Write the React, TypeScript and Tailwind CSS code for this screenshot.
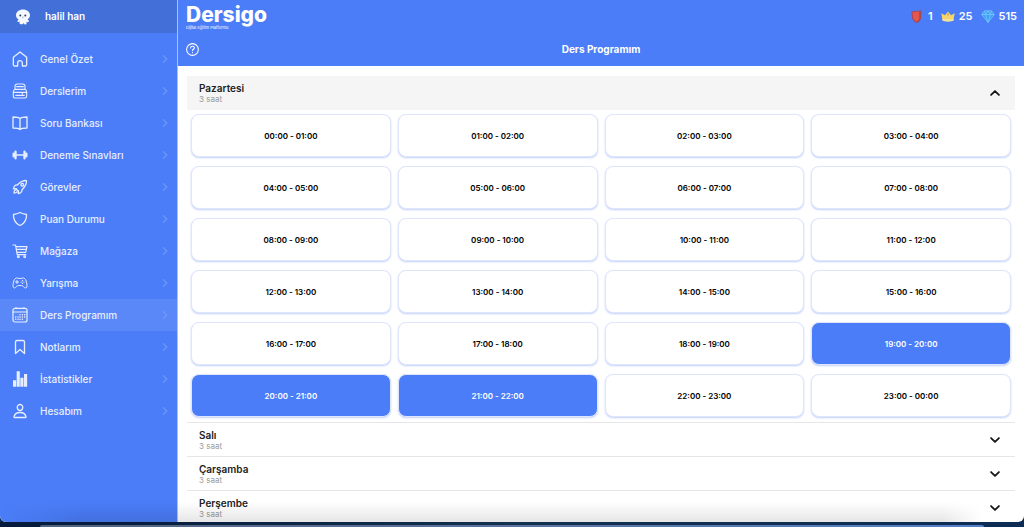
import { ReactNode, useState } from "react";
import {
  IoBarbell,
  IoBookmarkOutline,
  IoChevronDown,
  IoChevronForward,
  IoChevronUp,
  IoGameControllerOutline,
  IoPersonOutline,
  IoRocketOutline,
  IoShieldOutline,
} from "react-icons/io5";

const lineIcon = {
  viewBox: "0 0 24 24",
  fill: "none",
  stroke: "currentColor",
  strokeWidth: 2,
  strokeLinecap: "round",
  strokeLinejoin: "round",
  className: "size-4",
  "aria-hidden": true,
} as const;

const ionIcon = "size-4 [&_*]:stroke-[42px]";

const HomeIcon = () => (
  <svg {...lineIcon}>
    <path d="M2 9.5 12 1.5l10 8V20.5a2 2 0 0 1-2 2h-4.500V18a3.500 3.500 0 0 0-7 0v4.500H4a2 2 0 0 1-2-2z" />
  </svg>
);

const BackpackIcon = () => (
  <svg {...lineIcon} strokeWidth={1.7}>
    <path d="M4.500 9.500V5q0-3.500 3.500-3.500h8q3.500 0 3.500 3.500v4.500M7 5.500h10M4.500 9.500h15q2.500 1 2.500 4V20q0 2.500-2.500 2.500h-15Q2 22.500 2 20v-6.500q0-3 2.500-4zM2.500 14h19M5.500 18.500h13M15.500 14v2.500" />
  </svg>
);

const BookIcon = () => (
  <svg {...lineIcon}>
    <path d="M12 5.500C10.500 3.800 7.500 3 1.500 3v16.500c6 0 9 .5 10.500 2.200 1.500-1.700 4.500-2.200 10.500-2.200V3C16.500 3 13.500 3.800 12 5.500zV21.500" />
  </svg>
);

const CartIcon = () => (
  <svg {...lineIcon} strokeWidth={1.8}>
    <path d="M1.500 3h3.800l2.500 14.500h13M5.800 5.500h16.700L20.500 14H7.500M7 9.700h14" />
    <circle cx="9.500" cy="20.700" r="1.300" />
    <circle cx="19" cy="20.700" r="1.300" />
  </svg>
);

const CalendarIcon = () => (
  <svg {...lineIcon} strokeWidth={1.8}>
    <rect x="1.500" y="2" width="21" height="20.500" rx="3" />
    <path d="M1.500 7.500h21M6 1v1M18 1v1" />
    <path
      strokeWidth="2.200"
      d="M12 11.500h.1M15.500 11.500h.1M19 11.500h.1M5.500 15h.1M9 15h.1M12 15h.1M15.500 15h.1M19 15h.1M5.500 18.500h.1M9 18.500h.1M12 18.500h.1M15.500 18.500h.1"
    />
  </svg>
);

const ChartIcon = () => (
  <svg viewBox="0 0 24 24" fill="currentColor" className="size-4" aria-hidden>
    <path d="M1.500 14h4.700v9.500H1.500zM7 .5h4.700v23H7zM12.500 10h4.700v13.500h-4.700zM18 4.500h4.700v19H18z" />
  </svg>
);

const Avatar = () => (
  <svg viewBox="0 0 16 16" className="size-4" aria-hidden>
    <path
      fill="#f5f9ff"
      d="M8 .5c3.800 0 7 2.400 7 5.700 0 2-1.100 3.300-2.500 4 1 .6 1.600 1.400 1.300 2.300-.4.9-1.500.8-2.300.3.300 1.300.2 2.500-.9 2.700-1 .2-1.500-.7-2-1.500-.4.800-1.100 1.500-1.900 1.300-1 .2-2-.1-2.200-1-.1-.6 0-1.200.2-1.800-.8.500-1.900.6-2.200-.1-.2-.8.400-1.500 1.300-2C2 9.400 1 8.100 1 6.200 1 2.900 4.200.5 8 .5z"
    />
    <circle cx="5.300" cy="6.500" r="1" fill="#28406f" />
    <circle cx="10.300" cy="6.500" r="1" fill="#28406f" />
    <path d="M7.200 8.200q.6.600 1.200 0" stroke="#28406f" strokeWidth=".6" fill="none" />
  </svg>
);

const HelpIcon = () => (
  <svg viewBox="0 0 24 24" className="size-[13px]" fill="none" stroke="currentColor" strokeWidth="2" aria-hidden>
    <circle cx="12" cy="12" r="10.800" />
    <path strokeLinecap="round" d="M8.500 9.200c0-2 1.500-3.300 3.500-3.300s3.500 1.200 3.500 3c0 2.600-3.500 2.600-3.500 5.100M12 17.500v.3" />
  </svg>
);

const ShieldBadge = () => (
  <svg viewBox="0 0 11 13" className="h-[13px] w-[11px]" aria-hidden>
    <path d="M.5 1.500 10.500.5 10 8c-.3 2.500-2 4-4.500 5C3 11.500 1.300 10 1 7.500z" fill="#a9434f" />
    <path d="M1.500 2.200 8 1.500v8L5.500 11.800C3.500 10.600 2.200 9.300 2 7.500z" fill="#e4574f" />
    <path d="M8 1.500 9.700 1.300 9.300 7.800c-.2.900-.7 1.600-1.300 2.200z" fill="#8d5a58" />
  </svg>
);

const CrownBadge = () => (
  <svg viewBox="0 0 14 11" className="h-[11px] w-[14px]" aria-hidden>
    <path d="M.3 2.200 4 4.200 7 .6l3 3.600 3.700-2L12.300 9.800q-5.300 1.400-10.600 0z" fill="#f6d469" />
    <path d="M1.300 7.400q5.700 1.800 11.400 0l-.4 2.400q-5.300 1.400-10.600 0z" fill="#f3e3a0" />
    <path d="M7 1.800v3" stroke="#c9a14c" strokeWidth="1" />
  </svg>
);

const DiamondBadge = () => (
  <svg viewBox="0 0 14 13" className="h-[13px] w-[14px]" aria-hidden>
    <path d="M3.500.8h7L13.300 4.500 7 12.500.7 4.500z" fill="#3fa0f5" />
    <path
      d="M3.500.8h7L13.300 4.500 7 12.500.7 4.500zM.7 4.500h12.600M3.500.8 4.500 4.500 7 12.500l2.500-8 1-3.700M4.500 4.500 7 .8l2.500 3.700"
      fill="none"
      stroke="#7ccbfa"
      strokeWidth=".7"
    />
  </svg>
);

const menu: { label: string; icon: ReactNode }[] = [
  { label: "Genel Özet", icon: <HomeIcon /> },
  { label: "Derslerim", icon: <BackpackIcon /> },
  { label: "Soru Bankası", icon: <BookIcon /> },
  { label: "Deneme Sınavları", icon: <IoBarbell className="size-4" /> },
  { label: "Görevler", icon: <IoRocketOutline className={ionIcon} /> },
  { label: "Puan Durumu", icon: <IoShieldOutline className={ionIcon} /> },
  { label: "Mağaza", icon: <CartIcon /> },
  { label: "Yarışma", icon: <IoGameControllerOutline className="size-4" /> },
  { label: "Ders Programım", icon: <CalendarIcon /> },
  { label: "Notlarım", icon: <IoBookmarkOutline className={ionIcon} /> },
  { label: "İstatistikler", icon: <ChartIcon /> },
  { label: "Hesabım", icon: <IoPersonOutline className={ionIcon} /> },
];

const days = ["Pazartesi", "Salı", "Çarşamba", "Perşembe"];

const pad = (n: number) => String(n % 24).padStart(2, "0");
const slots = Array.from({ length: 24 }, (_, i) => `${pad(i)}:00 - ${pad(i + 1)}:00`);

const Sidebar = () => (
  <aside className="flex w-[178px] shrink-0 flex-col border-r border-[#a9c2ff] bg-[#4b7df8] text-[#e6eeff]">
    <div className="flex h-[33px] items-center gap-3.5 bg-[#4270d8] pl-[15px] text-[10px] font-semibold text-white">
      <Avatar />
      halil han
    </div>
    <nav className="mt-2.5 flex flex-col">
      {menu.map(({ label, icon }) => (
        <a
          key={label}
          href="#"
          className={
            label === "Ders Programım"
              ? "flex h-8 items-center bg-[#5b88f8] pr-1.5 pl-3 text-[10px] font-medium"
              : "flex h-8 items-center pr-1.5 pl-3 text-[10px] font-medium"
          }
        >
          {icon}
          <span className="ml-3 flex-1">{label}</span>
          <IoChevronForward className="size-3 text-[#7399fa]" />
        </a>
      ))}
    </nav>
  </aside>
);

const Header = () => (
  <header className="flex h-[66px] shrink-0 flex-col bg-[#4b7df8] text-white">
    <div className="flex h-[33px] items-center justify-between pr-[7px] pl-2">
      <div>
        <div className="text-[21px] leading-[22px] font-extrabold">Dersigo</div>
        <div className="text-[4px] leading-1 text-white">Dijital Eğitim Platformu</div>
      </div>
      <div className="flex items-center gap-2 text-[11px] font-semibold">
        <span className="flex items-center gap-1.5">
          <ShieldBadge />1
        </span>
        <span className="flex items-center gap-1">
          <CrownBadge />
          25
        </span>
        <span className="flex items-center gap-1">
          <DiamondBadge />
          515
        </span>
      </div>
    </div>
    <div className="grid h-[33px] grid-cols-[1fr_auto_1fr] items-center px-2">
      <button type="button" aria-label="Yardım" className="w-fit">
        <HelpIcon />
      </button>
      <h1 className="text-[10px] font-bold">Ders Programım</h1>
    </div>
  </header>
);

const SlotGrid = () => {
  const [selected, setSelected] = useState([19, 20, 21]);

  const toggle = (hour: number) => {
    setSelected(
      selected.includes(hour)
        ? selected.filter((h) => h !== hour)
        : [...selected, hour]
    );
  };

  return (
    <div className="grid grid-cols-4 gap-x-[7px] gap-y-[9px] px-1 pt-1 pb-[5px]">
      {slots.map((slot, hour) => (
        <button
          key={slot}
          type="button"
          aria-pressed={selected.includes(hour)}
          onClick={() => toggle(hour)}
          className={
            selected.includes(hour)
              ? "h-[43px] rounded-lg border border-[#dfe6fc] bg-[#4b7df8] text-[8px] font-semibold text-white shadow-[0_1px_2px_#c3d0fa]"
              : "h-[43px] rounded-lg border border-[#dfe6fc] bg-white text-[8px] font-semibold text-black shadow-[0_1px_2px_#c3d0fa]"
          }
        >
          {slot}
        </button>
      ))}
    </div>
  );
};

export default function App() {
  const [openDay, setOpenDay] = useState("Pazartesi");

  return (
    <div className="flex h-screen flex-col bg-[#0c2a4d] font-['Inter',sans-serif]">
      <div className="relative flex min-h-0 flex-1 overflow-hidden rounded-b-md bg-white">
        <Sidebar />
        <div className="flex min-w-0 flex-1 flex-col">
          <Header />
          <main className="min-h-0 flex-1 overflow-hidden px-[9px] pt-2.5">
            {days.map((day) => {
              const open = day === openDay;
              return (
                <section key={day}>
                  <button
                    type="button"
                    aria-expanded={open}
                    onClick={() => setOpenDay(open ? "" : day)}
                    className={
                      open
                        ? "flex h-[34px] w-full items-center justify-between bg-[#f5f5f5] pr-[13px] pl-3 text-left"
                        : "flex h-[34px] w-full items-center justify-between border-t border-[#e6e6ea] pr-[13px] pl-3 text-left"
                    }
                  >
                    <span className="flex flex-col">
                      <span className="text-[10px] leading-3 font-semibold text-[#222222]">{day}</span>
                      <span className="text-[8px] leading-2.5 text-[#9a9a9a]">3 saat</span>
                    </span>
                    {open ? (
                      <IoChevronUp className="size-3.5 text-[#151515] [&_*]:stroke-[64px]" />
                    ) : (
                      <IoChevronDown className="size-3.5 text-[#151515] [&_*]:stroke-[64px]" />
                    )}
                  </button>
                  {open && <SlotGrid />}
                </section>
              );
            })}
          </main>
        </div>
        <div className="pointer-events-none absolute inset-x-0 bottom-0 h-5 bg-linear-to-t from-black/10 to-transparent [mask-image:linear-gradient(to_right,transparent,black_8%,black_92%,transparent_96%)]" />
      </div>
      <div className="h-[5px] shrink-0 bg-linear-to-r from-[#071c3d] from-12% via-[#12304f] via-50% to-[#0d2c55] px-10 pt-[3px]">
        <div className="h-full rounded-t-sm bg-linear-to-r from-[#52637f] via-[#5a749f] to-[#5480c8]" />
      </div>
    </div>
  );
}
